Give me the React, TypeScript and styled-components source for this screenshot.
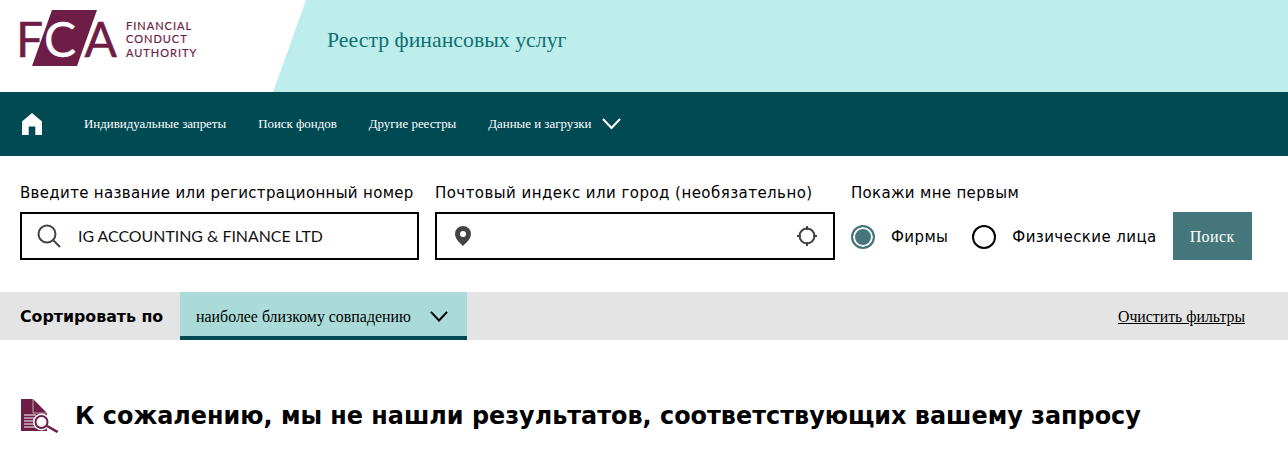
import React from "react";
import styled, { createGlobalStyle } from "styled-components";

const Global = createGlobalStyle`
  html, body { margin: 0; padding: 0; background: #fff; }
  body { font-family: "Liberation Serif", serif; color: #000; }
`;

const Page = styled.div`
  width: 1288px;
  height: 450px;
  overflow: hidden;
`;

const Header = styled.header`
  height: 92px;
  display: flex;
  background: #bdeeeb;
`;

const LogoPanel = styled.div`
  width: 306px;
  flex: none;
  background: #fff;
  clip-path: polygon(0 0, 100% 0, 273px 100%, 0 100%);
  padding: 10px 0 0 16px;
  box-sizing: border-box;
  display: flex;
  align-items: flex-start;
`;

const LogoText = styled.div`
  margin: 9px 0 0 9px;
  font: 400 11px/13.4px Lato, sans-serif;
  letter-spacing: 1px;
  color: #6e1e46;
  -webkit-text-stroke: 0.2px #6e1e46;
`;

const RegisterTitle = styled.h1`
  margin: 0;
  padding: 26px 0 0 21px;
  font: 400 21.8px/28px "Liberation Serif", serif;
  color: #0f7073;
`;

const Nav = styled.nav`
  height: 64px;
  background: #004a54;
  display: flex;
  align-items: center;
  padding-left: 22px;
`;

const HomeLink = styled.a`
  display: flex;
  width: 20px;
  margin-right: 42px;
`;

const NavItem = styled.a`
  display: flex;
  align-items: center;
  gap: 11px;
  margin-right: 32px;
  font: 400 12.9px/18px "Liberation Serif", serif;
  color: #fff;
`;

const SearchForm = styled.section`
  height: 136px;
  padding: 27px 0 0 20px;
  box-sizing: border-box;
  display: flex;
  align-items: flex-start;
`;

const Field = styled.div<{ $width: number }>`
  width: ${(p) => p.$width}px;
  margin-right: 16px;
`;

const FieldLabel = styled.div<{ $spacing: number }>`
  font: 400 15px/18px "DejaVu Sans", sans-serif;
  letter-spacing: ${(p) => p.$spacing}px;
  white-space: nowrap;
  padding-top: 1px;
  margin-bottom: 10px;
`;

const InputBox = styled.div<{ $left: number }>`
  height: 48px;
  box-sizing: border-box;
  border: 2px solid #000;
  display: flex;
  align-items: center;
  padding: 0 16px 0 ${(p) => p.$left}px;
  color: #444;
`;

const InputValue = styled.span`
  margin-left: 17px;
  font: 400 15.9px/20px Lato, sans-serif;
  color: #111;
  flex: 1;
`;

const Spacer = styled.span`
  flex: 1;
`;

const RadioColumn = styled.div`
  display: flex;
  flex-direction: column;
`;

const RadioRow = styled.div`
  display: flex;
  align-items: center;
  height: 48px;
`;

const RadioLabel = styled.label<{ $gap: number }>`
  display: flex;
  align-items: center;
  gap: 16px;
  margin: 2px ${(p) => p.$gap}px 0 0;
  font: 400 15px/18px "DejaVu Sans", sans-serif;
  letter-spacing: 0.4px;
`;

const RadioMark = styled.span<{ $on?: boolean }>`
  width: 24px;
  height: 24px;
  box-sizing: border-box;
  border-radius: 50%;
  border: 2px solid ${(p) => (p.$on ? "#44767c" : "#000")};
  background: ${(p) => (p.$on ? "#44767c" : "#fff")};
  box-shadow: ${(p) => (p.$on ? "inset 0 0 0 2px #fff" : "none")};
`;

const SearchButton = styled.button`
  width: 79px;
  height: 48px;
  border: 0;
  padding: 2px 0 0;
  background: #44767c;
  color: #fff;
  font: 400 16px/18px "Liberation Serif", serif;
  letter-spacing: 0.4px;
`;

const SortBar = styled.div`
  height: 48px;
  background: #e4e4e4;
  display: flex;
  align-items: stretch;
  padding: 0 43px 0 20px;
`;

const SortLabel = styled.div`
  width: 160px;
  padding-top: 1px;
  font: 700 15.8px/48px "DejaVu Sans", sans-serif;
  white-space: nowrap;
`;

const SortSelect = styled.div`
  width: 287px;
  box-sizing: border-box;
  padding: 5px 19px 0 16px;
  background: #aadbd8;
  border-bottom: 4px solid #004a54;
  display: flex;
  align-items: center;
  justify-content: space-between;
  font: 400 15.9px/18px "Liberation Serif", serif;
`;

const ClearLink = styled.a`
  margin-left: auto;
  align-self: center;
  font: 400 15.8px/18px "Liberation Serif", serif;
  color: #000;
  text-decoration: underline;
  padding-top: 2px;
`;

const NoResults = styled.div`
  display: flex;
  align-items: center;
  padding: 59px 0 0 21px;
  gap: 17px;
`;

const NoResultsTitle = styled.h2`
  margin: 0;
  font: 700 23.9px/32px "DejaVu Sans", sans-serif;
  white-space: nowrap;
`;

const Chevron = ({ width, color }: { width: number; color: string }) => (
  <svg width={width} height={width * 0.6} viewBox="0 0 20 12" fill="none" aria-hidden="true">
    <path d="M1 1l9 9.500L19 1" stroke={color} strokeWidth="2.200" />
  </svg>
);

export default function App() {
  return (
    <Page>
      <Global />
      <Header>
        <LogoPanel>
          <svg width="101" height="56" viewBox="0 0 101 56" aria-label="FCA">
            <polygon points="36,0 81,0 61,56 16,56" fill="#6e1e46" />
            <text x="0" y="47" fontFamily="Lato, sans-serif" fontSize="48" fill="#6e1e46" stroke="#6e1e46" strokeWidth="0.5">F</text>
            <text x="28" y="47" fontFamily="Lato, sans-serif" fontSize="48" fill="#fff" stroke="#fff" strokeWidth="0.3">C</text>
            <text x="68.500" y="47" fontFamily="Lato, sans-serif" fontSize="48" fill="#6e1e46" stroke="#6e1e46" strokeWidth="0.5">A</text>
          </svg>
          <LogoText>
            FINANCIAL
            <br />
            CONDUCT
            <br />
            AUTHORITY
          </LogoText>
        </LogoPanel>
        <RegisterTitle>Реестр финансовых услуг</RegisterTitle>
      </Header>
      <Nav>
        <HomeLink>
          <svg width="20" height="22" viewBox="0 0 20 22" fill="#fff" aria-hidden="true">
            <path d="M10 0 20 8.500V22H13.300V13.500H6.700V22H0V8.500Z" />
          </svg>
        </HomeLink>
        <NavItem>Индивидуальные запреты</NavItem>
        <NavItem>Поиск фондов</NavItem>
        <NavItem>Другие реестры</NavItem>
        <NavItem>
          Данные и загрузки
          <Chevron width={19} color="#fff" />
        </NavItem>
      </Nav>
      <SearchForm>
        <Field $width={399}>
          <FieldLabel $spacing={0.33}>Введите название или регистрационный номер</FieldLabel>
          <InputBox $left={15}>
            <svg width="24" height="24" viewBox="0 0 24 24" fill="none" stroke="#444" strokeWidth="2" aria-hidden="true">
              <circle cx="10" cy="10" r="8.500" />
              <path d="M16 16l7 7" />
            </svg>
            <InputValue>IG ACCOUNTING &amp; FINANCE LTD</InputValue>
          </InputBox>
        </Field>
        <Field $width={400}>
          <FieldLabel $spacing={0.45}>Почтовый индекс или город (необязательно)</FieldLabel>
          <InputBox $left={17}>
            <svg width="18" height="22" viewBox="0 0 18 22" aria-hidden="true">
              <path fillRule="evenodd" fill="#444" d="M9 1a8 8 0 0 1 8 8c0 5-5 9-8 12C6 18 1 14 1 9a8 8 0 0 1 8-8Zm0 5a3 3 0 1 0 0 6 3 3 0 0 0 0-6Z" />
            </svg>
            <Spacer />
            <svg width="20" height="20" viewBox="0 0 20 20" fill="none" stroke="#444" strokeWidth="2" aria-hidden="true">
              <circle cx="10" cy="10" r="7.500" />
              <path d="M10 0v4M10 16v4M0 10h4M16 10h4" />
            </svg>
          </InputBox>
        </Field>
        <RadioColumn>
          <FieldLabel $spacing={0.33}>Покажи мне первым</FieldLabel>
          <RadioRow>
            <RadioLabel $gap={24}><RadioMark $on />Фирмы</RadioLabel>
            <RadioLabel $gap={16}><RadioMark />Физические лица</RadioLabel>
            <SearchButton>Поиск</SearchButton>
          </RadioRow>
        </RadioColumn>
      </SearchForm>
      <SortBar>
        <SortLabel>Сортировать по</SortLabel>
        <SortSelect>
          наиболее близкому совпадению
          <Chevron width={18} color="#000" />
        </SortSelect>
        <ClearLink>Очистить фильтры</ClearLink>
      </SortBar>
      <NoResults>
        <svg width="37" height="34" viewBox="0 0 37 34" aria-hidden="true">
          <path fill="#6e1e46" d="M0 0H12L26 14V32H0Z" />
          <path fill="none" stroke="#fff" strokeWidth="1" d="M12 0V14H26" opacity="0.6" />
          <path stroke="#fff" strokeWidth="1" d="M3 16h12M3 19h11M3 22h10M3 25h10M3 28h12" />
          <circle cx="20.500" cy="23" r="8.500" fill="#fff" />
          <circle cx="20.500" cy="23" r="6" fill="none" stroke="#6e1e46" strokeWidth="2" />
          <path stroke="#6e1e46" strokeWidth="2.500" d="M26 27l10.500 6" />
        </svg>
        <NoResultsTitle>К сожалению, мы не нашли результатов, соответствующих вашему запросу</NoResultsTitle>
      </NoResults>
    </Page>
  );
}
